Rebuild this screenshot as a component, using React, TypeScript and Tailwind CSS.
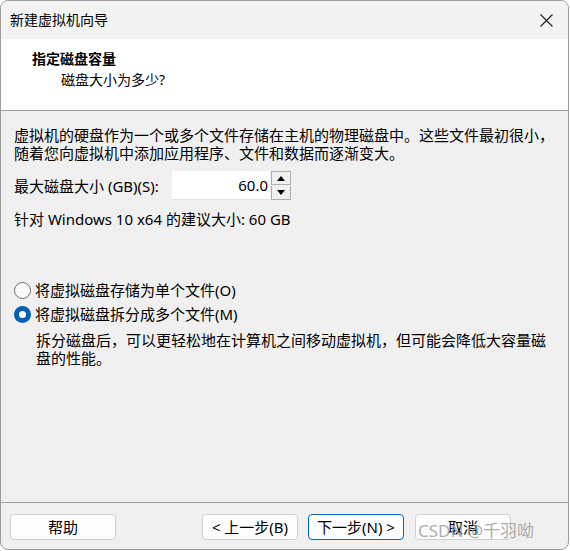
import React from 'react'

const font = "font-['Noto_Sans','Noto_Sans_CJK_SC',sans-serif]"

const Radio = ({ checked, label }: { checked?: boolean; label: string }) => (
  <div className="flex items-center h-[20px]">
    {checked ? (
      <span className="w-[17px] h-[17px] rounded-full bg-[#005fb8] flex items-center justify-center">
        <span className="w-[7px] h-[7px] rounded-full bg-white" />
      </span>
    ) : (
      <span className="w-[17px] h-[17px] rounded-full border border-[#6e6e6e] bg-[#fbfbfb]" />
    )}
    <span className="ml-[4px] text-[15px] leading-[20px] text-black">{label}</span>
  </div>
)

const Btn = ({ children, primary, className = '' }: { children: React.ReactNode; primary?: boolean; className?: string }) => (
  <div
    className={
      'h-[26px] w-[96px] rounded-[4px] flex items-center justify-center text-[15px] text-black bg-[#fdfdfd] border ' +
      (primary ? 'border-[#0067c0]' : 'border-[#d0d0d0]') +
      ' ' +
      className
    }
  >
    {children}
  </div>
)

export default function App() {
  return (
    <div className={`w-[570px] h-[551px] bg-white ${font}`}>
      <div className="w-[569px] h-[550px] border border-[#9c9c9c] rounded-[8px] overflow-hidden flex flex-col bg-[#f0f0f0]">
        {/* title bar */}
        <div className="h-[38px] bg-[#f3f3f3] flex items-center justify-between pl-[9px] pr-[15px]">
          <span className="text-[14px] text-black leading-none">新建虚拟机向导</span>
          <svg width="13" height="13" viewBox="0 0 13 13">
            <path d="M0.5 0.5 L12.5 12.5 M12.5 0.5 L0.5 12.5" stroke="#1a1a1a" strokeWidth="1.1" />
          </svg>
        </div>

        {/* header */}
        <div className="h-[72px] bg-white border-b border-[#a0a0a0] pl-[31px] pt-[10px]">
          <div className="text-[14px] font-bold leading-[20px] text-black">指定磁盘容量</div>
          <div className="text-[14px] leading-[20px] text-black pl-[29px] mt-[1px]">磁盘大小为多少?</div>
        </div>

        {/* body */}
        <div className="flex-1 pl-[13px] pr-[10px] text-[15px] text-black">
          <div className="mt-[15px] leading-[18px]">
            <div>虚拟机的硬盘作为一个或多个文件存储在主机的物理磁盘中。这些文件最初很小，</div>
            <div>随着您向虚拟机中添加应用程序、文件和数据而逐渐变大。</div>
          </div>

          <div className="mt-[9px] flex items-center">
            <span className="leading-[18px] w-[158px] whitespace-nowrap">最大磁盘大小 (GB)(S):</span>
            <div className="flex h-[29px]">
              <div className="w-[98px] bg-white border-b border-[#e0e0e0] flex items-center justify-end pr-[2px] text-[15px]">
                60.0
              </div>
              <div className="w-[20px] flex flex-col ml-[1px]">
                <div className="h-[14px] border border-[#adadad] bg-[#f0f0f0] flex items-center justify-center">
                  <svg width="8" height="5" viewBox="0 0 8 5"><path d="M4 0 L8 5 L0 5 Z" fill="#000" /></svg>
                </div>
                <div className="h-[14px] border border-[#adadad] border-t-0 bg-[#f0f0f0] flex items-center justify-center mt-[1px]">
                  <svg width="8" height="5" viewBox="0 0 8 5"><path d="M0 0 L8 0 L4 5 Z" fill="#000" /></svg>
                </div>
              </div>
            </div>
          </div>

          <div className="mt-[10px] leading-[18px]">针对 Windows 10 x64 的建议大小: 60 GB</div>

          <div className="mt-[52px] flex flex-col gap-[4px]">
            <Radio label="将虚拟磁盘存储为单个文件(O)" />
            <Radio checked label="将虚拟磁盘拆分成多个文件(M)" />
          </div>

          <div className="mt-[7px] pl-[22px] leading-[18px]">
            <div>拆分磁盘后，可以更轻松地在计算机之间移动虚拟机，但可能会降低大容量磁</div>
            <div>盘的性能。</div>
          </div>
        </div>

        {/* footer */}
        <div className="h-[47px] border-t border-[#a0a0a0] flex items-start pt-[11px] pl-[9px] relative">
          <Btn className="w-[106px]">帮助</Btn>
          <Btn className="ml-[86px]">&lt; 上一步(B)</Btn>
          <Btn primary className="ml-[10px]">下一步(N) &gt;</Btn>
          <Btn className="ml-[11px]">取消</Btn>
          <span className="absolute z-10 left-[417px] top-[18px] text-[17px] leading-[20px] text-[#9a9a9a] opacity-80 whitespace-nowrap">
            CSDN @千羽呦
          </span>
        </div>
      </div>
    </div>
  )
}
